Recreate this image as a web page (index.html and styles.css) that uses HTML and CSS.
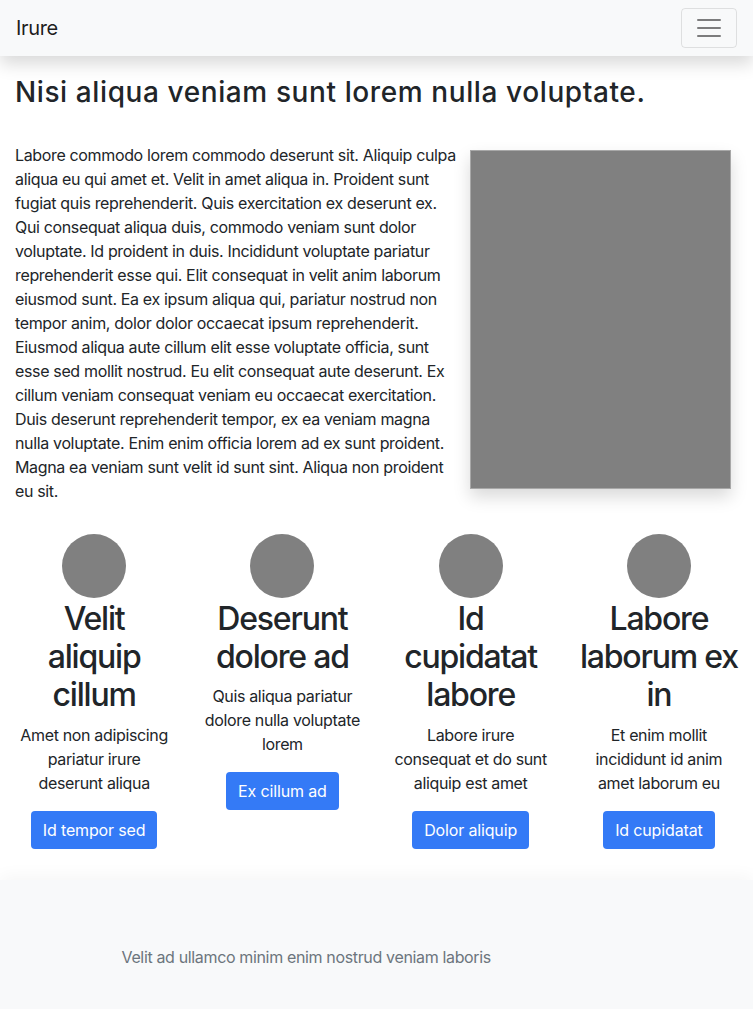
FILE: index.html
```html
<!DOCTYPE html>
<html lang="en">
<head>
<meta charset="utf-8">
<title>Irure</title>
<link rel="stylesheet" href="styles.css">
</head>
<body>
<nav class="navbar">
  <a class="brand" href="#">Irure</a>
  <button class="toggler" type="button" aria-label="Toggle navigation">
    <svg class="toggler-icon" viewBox="0 0 30 30" width="30" height="30"><path d="M4 7h22M4 15h22M4 23h22" stroke="rgba(0,0,0,0.5)" stroke-width="2" stroke-linecap="round" stroke-miterlimit="10" fill="none"/></svg>
  </button>
</nav>

<main class="main">
  <h2 class="title">Nisi aliqua veniam sunt lorem nulla voluptate.</h2>
  <div class="intro">
    <p class="intro-text">Labore commodo lorem commodo deserunt sit. Aliquip culpa aliqua eu qui amet et. Velit in amet aliqua in. Proident sunt fugiat quis reprehenderit. Quis exercitation ex deserunt ex. Qui consequat aliqua duis, commodo veniam sunt dolor voluptate. Id proident in duis. Incididunt voluptate pariatur reprehenderit esse qui. Elit consequat in velit anim laborum eiusmod sunt. Ea ex ipsum aliqua qui, pariatur nostrud non tempor anim, dolor dolor occaecat ipsum reprehenderit. Eiusmod aliqua aute cillum elit esse voluptate officia, sunt esse sed mollit nostrud. Eu elit consequat aute deserunt. Ex cillum veniam consequat veniam eu occaecat exercitation. Duis deserunt reprehenderit tempor, ex ea veniam magna nulla voluptate. Enim enim officia lorem ad ex sunt proident. Magna ea veniam sunt velit id sunt sint. Aliqua non proident eu sit.</p>
    <div class="picture"></div>
  </div>
</main>

<section class="features">
  <div class="feature">
    <div class="avatar"></div>
    <h2 class="feature-title">Velit aliquip cillum</h2>
    <p class="feature-text">Amet non adipiscing pariatur irure deserunt aliqua</p>
    <a class="btn" href="#">Id tempor sed</a>
  </div>
  <div class="feature">
    <div class="avatar"></div>
    <h2 class="feature-title">Deserunt dolore ad</h2>
    <p class="feature-text">Quis aliqua pariatur dolore nulla voluptate lorem</p>
    <a class="btn" href="#">Ex cillum ad</a>
  </div>
  <div class="feature">
    <div class="avatar"></div>
    <h2 class="feature-title">Id cupidatat labore</h2>
    <p class="feature-text">Labore irure consequat et do sunt aliquip est amet</p>
    <a class="btn" href="#">Dolor aliquip</a>
  </div>
  <div class="feature">
    <div class="avatar"></div>
    <h2 class="feature-title">Labore laborum ex in</h2>
    <p class="feature-text">Et enim mollit incididunt id anim amet laborum eu</p>
    <a class="btn" href="#">Id cupidatat</a>
  </div>
</section>

<footer class="footer">
  <div class="footer-inner">
    <p class="footer-text">Velit ad ullamco minim enim nostrud veniam laboris</p>
  </div>
</footer>
</body>
</html>
```

FILE: styles.css
```css
* { box-sizing: border-box; }

html, body {
  margin: 0;
  padding: 0;
}

body {
  font-family: Inter, "Liberation Sans", sans-serif;
  font-size: 16px;
  line-height: 1.5;
  letter-spacing: -0.35px;
  color: #212529;
  background: #fff;
}

.navbar {
  position: relative;
  z-index: 2;
  display: flex;
  align-items: center;
  justify-content: space-between;
  height: 56px;
  padding: 8px 16px;
  background: #f8f9fa;
  box-shadow: 0 8px 16px rgba(0, 0, 0, 0.15);
}

.brand {
  font-size: 20px;
  line-height: 30px;
  padding: 5px 0;
  color: rgba(0, 0, 0, 0.9);
  text-decoration: none;
}

.toggler {
  display: flex;
  align-items: center;
  justify-content: center;
  width: 56px;
  height: 40px;
  padding: 4px 12px;
  background: transparent;
  border: 1px solid rgba(0, 0, 0, 0.1);
  border-radius: 4px;
}

.toggler-icon { display: block; }

.main {
  padding: 20px 15px 0;
}

.title {
  margin: 0 0 8px;
  font-size: 28px;
  font-weight: 500;
  line-height: 1.2;
  letter-spacing: 0.6px;
}

.intro {
  display: flex;
  align-items: flex-start;
  justify-content: space-between;
  margin-top: 33px;
}

.intro-text {
  width: 445px;
  margin: 0;
}

.picture {
  flex: none;
  width: 261px;
  height: 339px;
  margin: 7px 7px 0 0;
  background: #808080;
  border: 1px solid #a8a8a8;
  box-shadow: 0 8px 16px rgba(0, 0, 0, 0.15);
}

.features {
  display: grid;
  grid-template-columns: repeat(4, 1fr);
  padding-top: 31px;
  padding-bottom: 31px;
}

.feature {
  display: flex;
  flex-direction: column;
  align-items: center;
  padding: 0 15px;
  text-align: center;
}

.avatar {
  width: 64px;
  height: 64px;
  border-radius: 50%;
  background: #808080;
  margin-bottom: 2px;
}

.feature-title {
  margin: 0 0 8px;
  font-size: 32px;
  font-weight: 500;
  line-height: 1.2;
  letter-spacing: -1.2px;
}

.feature-text {
  margin: 0 0 16px;
}

.btn {
  display: inline-block;
  padding: 7px 12px;
  font-size: 16px;
  line-height: 24px;
  letter-spacing: -0.15px;
  color: #fff;
  background: #347af6;
  border-radius: 4px;
  text-decoration: none;
}

.footer {
  background: #f8f9fa;
  box-shadow: 0 -4px 16px rgba(0, 0, 0, 0.04);
  padding: 65px 0 42px;
}

.footer-inner {
  width: 540px;
  margin: 0 auto;
  padding: 0 15px;
}

.footer-text {
  margin: 0;
  color: #6c757d;
}
```
